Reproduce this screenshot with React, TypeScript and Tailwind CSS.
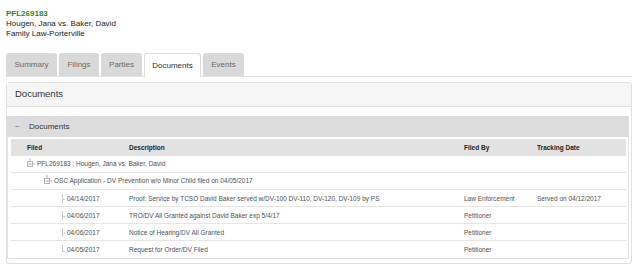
import React from "react";

function MinusBox() {
  return (
    <svg width="9" height="12" viewBox="0 0 9 12" className="shrink-0">
      <line x1="3" y1="0" x2="3" y2="3.5" stroke="#bbb" strokeWidth="1" />
      <rect x="0.5" y="3.5" width="5" height="5" fill="#fff" stroke="#b5b5b5" strokeWidth="1" />
      <line x1="1.5" y1="6" x2="4.5" y2="6" stroke="#999" strokeWidth="1" />
      <line x1="5.5" y1="6" x2="8" y2="6" stroke="#bbb" strokeWidth="1" />
    </svg>
  );
}

function Connector({ last }: { last?: boolean }) {
  return (
    <svg width="5" height="17" viewBox="0 0 5 17" className="shrink-0">
      <line x1="0.5" y1="4" x2="0.5" y2={last ? 10.5 : 13} stroke="#c8c8c8" strokeWidth="1" />
      <line x1="0.5" y1={last ? 10.5 : 9.5} x2="3" y2={last ? 10.5 : 9.5} stroke="#c8c8c8" strokeWidth="1" />
    </svg>
  );
}

const tabs = [
  { label: "Summary", w: "w-[51px]" },
  { label: "Filings", w: "w-[40px]" },
  { label: "Parties", w: "w-[41px]" },
  { label: "Documents", w: "w-[57px]", active: true },
  { label: "Events", w: "w-[41px]" },
];

const docs = [
  {
    date: "04/14/2017",
    desc: "Proof: Service by TCSO David Baker served w/DV-100 DV-110, DV-120, DV-109 by PS",
    by: "Law Enforcement",
    track: "Served on 04/12/2017",
  },
  { date: "04/06/2017", desc: "TRO/DV All Granted against David Baker exp 5/4/17", by: "Petitioner", track: "" },
  { date: "04/06/2017", desc: "Notice of Hearing/DV All Granted", by: "Petitioner", track: "" },
  { date: "04/05/2017", desc: "Request for Order/DV Filed", by: "Petitioner", track: "", last: true },
];

export default function App() {
  return (
    <div className="w-[640px] h-[271px] bg-white overflow-hidden font-['Liberation_Sans',Arial,sans-serif] text-[#333]">
      <div className="pl-[6px] pt-[8px]">
        <div className="text-[8px] leading-[11px] font-bold text-[#1f8a1f]">PFL269183</div>
        <div className="text-[8px] leading-[10px] text-[#222]">Hougen, Jana vs. Baker, David</div>
        <div className="text-[8px] leading-[10px] text-[#222]">Family Law-Porterville</div>
      </div>

      <div className="mt-[14px] ml-[6px] w-[626px] flex gap-[2px] border-b border-[#e2e2e2] h-[24px]">
        {tabs.map((t) =>
          t.active ? (
            <div
              key={t.label}
              className={`${t.w} h-[24px] bg-white border border-b-0 border-[#dddddd] rounded-t-[3px] flex items-center justify-center text-[8px] text-[#333]`}
            >
              {t.label}
            </div>
          ) : (
            <div
              key={t.label}
              className={`${t.w} h-[23px] bg-[#d9d9d9] rounded-t-[3px] flex items-center justify-center text-[8px] text-[#6a6a6a]`}
            >
              {t.label}
            </div>
          )
        )}
      </div>

      <div className="mt-[5px] ml-[6px] w-[626px] border border-[#e0e0e0] rounded-[3px]">
        <div className="h-[24px] bg-[#f5f5f5] border-b border-[#e0e0e0] flex items-center pl-[8px] text-[9.5px] text-[#333]">
          Documents
        </div>
        <div className="pt-[9px] pr-[2px] pb-[4px]">
          <div className="h-[21px] bg-[#dcdcdc] flex items-center text-[8px] text-[#333]">
            <span className="pl-[8px] w-[22px] text-[#777]">−</span>
            <span>Documents</span>
          </div>
          <div className="border border-t-0 border-[#e2e2e2] pt-[2px] pl-[3px] pr-[2px]">
            <div className="grid grid-cols-[118px_335px_73px_1fr] h-[17px] items-center bg-[#e2e2e2] text-[6.5px] font-bold text-[#222]">
              <div className="pl-[16px]">Filed</div>
              <div>Description</div>
              <div>Filed By</div>
              <div>Tracking Date</div>
            </div>
            <div className="h-[17px] flex items-center pl-[16px] text-[6.5px] text-[#505050] border-b border-[#e6e6e6]">
              <MinusBox />
              <span className="ml-[1px]">PFL269183 : Hougen, Jana vs. Baker, David</span>
            </div>
            <div className="h-[17px] flex items-center pl-[33px] text-[6.5px] text-[#505050] border-b border-[#e6e6e6]">
              <MinusBox />
              <span className="ml-[1px]">OSC Application - DV Prevention w/o Minor Child filed on 04/05/2017</span>
            </div>
            {docs.map((d, i) => (
              <div
                key={i}
                className={`grid grid-cols-[118px_335px_73px_1fr] h-[17px] items-center text-[6.5px] text-[#505050] ${
                  d.last ? "" : "border-b border-[#e6e6e6]"
                }`}
              >
                <div className="flex items-center pl-[51px]">
                  <Connector last={d.last} />
                  <span>{d.date}</span>
                </div>
                <div className="whitespace-nowrap">{d.desc}</div>
                <div className="whitespace-nowrap">{d.by}</div>
                <div className="whitespace-nowrap">{d.track}</div>
              </div>
            ))}
          </div>
        </div>
      </div>
    </div>
  );
}
